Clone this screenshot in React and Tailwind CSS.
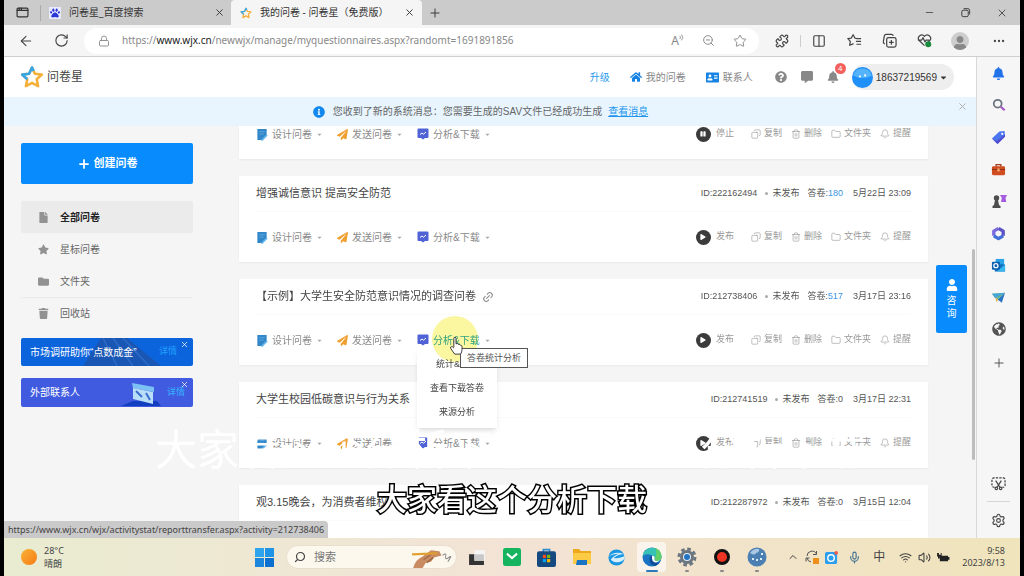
import { useState } from "react";
import {
  ArrowLeft, RotateCw, Lock, ZoomOut, Star, Puzzle, Columns2, X, Plus, Minus, Copy, Trash2,
  Folder, Bell, Ellipsis, ChevronUp, Mic, Wifi, Volume2, Search, AppWindow, Link2, Settings,
} from "lucide-react";
import {
  FaPaw, FaHome, FaAddressCard, FaQuestionCircle, FaCommentAlt, FaBell, FaCaretDown, FaFile,
  FaStar, FaFolder, FaTrash, FaPlay, FaPause, FaPaperPlane, FaInfoCircle, FaGlobeAmericas, FaUser,
} from "react-icons/fa";

const tools = ["设计问卷", "发送问卷", "分析&下载"];

const surveys = [
  { running: true },
  { title: "增强诚信意识 提高安全防范", id: "222162494", answers: 180, date: "5月22日 23:09" },
  { title: "【示例】大学生安全防范意识情况的调查问卷", id: "212738406", answers: 517, date: "3月17日 23:16", open: true },
  { title: "大学生校园低碳意识与行为关系", id: "212741519", answers: 0, date: "3月17日 22:31" },
  { title: "观3.15晚会，为消费者维权", id: "212287972", answers: 0, date: "3月15日 12:04", collapsed: true },
];

const navItems = [
  { label: "全部问卷", icon: FaFile },
  { label: "星标问卷", icon: FaStar },
  { label: "文件夹", icon: FaFolder },
  { label: "回收站", icon: FaTrash },
];

function StarLogo({ className }) {
  return (
    <svg viewBox="0 0 24 24" className={className} fill="none" strokeWidth="2.6" strokeLinejoin="round">
      <path d="M12 2.5l2.9 6.3 6.9.8-5.1 4.7 1.4 6.9L12 17.8l-6.1 3.4 1.4-6.9-5.1-4.7 6.9-.8z" stroke="#f5b03a" />
      <path d="M7.3 14.3L2.2 9.6l6.9-.8L12 2.5l1.6 3.5" stroke="#35a5e8" />
    </svg>
  );
}

/* ---------- browser chrome ---------- */

function TabStrip() {
  return (
    <div className="flex h-[25px] shrink-0 items-center bg-[#cbcbcb] text-[10px] text-[#333]">
      <button aria-label="Workspaces" className="flex h-4 w-[37px] items-center justify-center border-r border-[#aaa]">
        <AppWindow className="size-[13px]" strokeWidth={2.2} />
      </button>
      <div className="flex w-[190px] items-center gap-2 pl-2">
        <span className="flex size-3 items-center justify-center bg-[#e8eaff]">
          <FaPaw className="size-[10px] text-[#2a37d8]" />
        </span>
        <span className="flex-1">问卷星_百度搜索</span>
        <button aria-label="Close tab" className="pr-[6px]"><X className="size-[11px]" /></button>
      </div>
      <div className="flex w-[191px] items-center gap-2 self-stretch rounded-t bg-[#f5f5f5] pl-[9px]">
        <StarLogo className="size-3" />
        <span className="flex-1 whitespace-nowrap">我的问卷 - 问卷星（免费版）</span>
        <button aria-label="Close tab" className="pr-[7px]"><X className="size-[11px]" /></button>
      </div>
      <button aria-label="New tab" className="px-[6px]"><Plus className="size-[14px]" strokeWidth={1.6} /></button>
      <div className="ml-auto flex items-center gap-[25px] pr-3">
        <button aria-label="Minimize"><Minus className="size-[11px]" strokeWidth={1.6} /></button>
        <button aria-label="Restore">
          <svg viewBox="0 0 12 12" className="size-[11px]" fill="none" stroke="#333">
            <rect x="2" y="3.5" width="7" height="7" rx="1.5" />
            <path d="M4 1.8h4.5a2 2 0 0 1 2 2V8" />
          </svg>
        </button>
        <button aria-label="Close window"><X className="size-3" strokeWidth={1.6} /></button>
      </div>
    </div>
  );
}

function AddressBar() {
  return (
    <div className="flex h-8 shrink-0 items-center border-b border-[#cfcfcf] bg-[#f5f5f5] text-[#444]">
      <button aria-label="Back" className="w-11 pl-[14px]"><ArrowLeft className="size-4" strokeWidth={1.6} /></button>
      <button aria-label="Reload" className="w-9 pl-[6px]"><RotateCw className="size-[15px]" strokeWidth={1.8} /></button>
      <div className="flex h-[26px] flex-1 items-center rounded-full bg-white pr-3 pl-[14px] text-[#888]">
        <Lock className="size-3" strokeWidth={1.8} />
        <p className="ml-3 flex-1 text-[10px] whitespace-nowrap">
          https://<span className="text-[#222]">www.wjx.cn</span>/newwjx/manage/myquestionnaires.aspx?randomt=1691891856
        </p>
        <div className="flex items-center gap-[18px]">
          <button aria-label="Read aloud" className="flex items-start">
            <span className="text-[12px] leading-[14px]">A</span>
            <svg viewBox="0 0 6 8" className="h-[7px] w-[5px]" fill="none" stroke="#888">
              <path d="M1 2q1.500 2 0 4M3 .5q3 3.500 0 7" />
            </svg>
          </button>
          <button aria-label="Zoom"><ZoomOut className="size-[13px]" strokeWidth={1.8} /></button>
          <button aria-label="Favourite"><Star className="size-[14px]" strokeWidth={1.6} /></button>
        </div>
      </div>
      <div className="flex items-center pl-[5px]">
        <button aria-label="Extensions" className="flex w-9 justify-center"><Puzzle className="size-[14px]" /></button>
        <span className="h-3 w-px bg-[#ccc]" />
        <button aria-label="Split screen" className="flex w-9 justify-center"><Columns2 className="size-[14px]" /></button>
        <button aria-label="Favourites" className="flex w-[35px] justify-center">
          <svg viewBox="0 0 16 16" className="size-[15px]" fill="none" stroke="#444" strokeWidth="1.3" strokeLinejoin="round">
            <path d="M10 5.700L8.400 5.400 6.500 1.800 4.600 5.400.9 6l2.600 2.900-.6 4.200L7 11.300M10 6h5M9.500 9h5.500M10 12h5" />
          </svg>
        </button>
        <button aria-label="Collections" className="flex w-[35px] justify-center">
          <svg viewBox="0 0 16 16" className="size-[15px]" fill="none" stroke="#444" strokeWidth="1.3">
            <rect x="5" y="5" width="10" height="10" rx="2" />
            <path d="M10 7.500v5M7.500 10h5M3 11.500A2 2 0 0 1 1.500 9L2.500 3a2 2 0 0 1 2-1.500h5.500a2 2 0 0 1 2 1.500" />
          </svg>
        </button>
        <button aria-label="Browser essentials" className="flex w-[35px] justify-center">
          <svg viewBox="0 0 16 16" className="size-[15px]" fill="none" stroke="#444" strokeWidth="1.3" strokeLinejoin="round">
            <path d="M8 13.500L2.300 8A3.600 3.600 0 0 1 8 3.500 3.600 3.600 0 0 1 13.700 8L12 9.800M1 7.500h4l1.500-2.500 2 4.500 1.200-2H13" />
            <circle cx="12" cy="12" r="3.200" fill="#188a3b" stroke="none" />
          </svg>
        </button>
        <button aria-label="Profile" className="mx-[9px] flex size-[18px] items-end justify-center overflow-hidden rounded-full bg-[#cdcdcd]">
          <FaUser className="size-[14px] text-[#888]" />
        </button>
        <button aria-label="Settings and more" className="flex w-[42px] justify-center"><Ellipsis className="size-[14px]" /></button>
      </div>
    </div>
  );
}

function BrowserSidebar() {
  const cell = "flex h-8 items-center justify-center";
  return (
    <aside className="flex w-11 shrink-0 flex-col border-l border-[#d8d8d8] bg-[#f6f6f6] text-[#444]">
      <button aria-label="Notifications" className={cell}><FaBell className="size-[13px] text-[#2273ea]" /></button>
      <button aria-label="Search" className={cell}>
        <svg viewBox="0 0 16 16" className="size-[14px]" fill="none" strokeWidth="2">
          <circle cx="6.500" cy="6.500" r="4.500" stroke="#6b7280" />
          <path d="M10 10l4.500 4" stroke="#a855c8" strokeWidth="2.600" />
        </svg>
      </button>
      <button aria-label="Shopping" className={cell}>
        <svg viewBox="0 0 16 16" className="size-[15px]">
          <path d="M9 1.500l5.500-.5.5 6-8 8L1 9z" fill="#4a75ee" />
          <path d="M1 9l6 6 8-8-.2-2L6 12z" fill="#5549cc" />
          <circle cx="12" cy="4" r="1.200" fill="#fff" />
        </svg>
      </button>
      <button aria-label="Tools" className={cell}>
        <svg viewBox="0 0 16 16" className="size-[15px]">
          <path d="M5.500 5V2.800h5V5" fill="none" stroke="#a43a17" strokeWidth="1.400" />
          <rect x="1" y="4.500" width="14" height="9.500" rx="1.500" fill="#cf4d20" />
          <path d="M1 8h14" stroke="#8f2e10" />
          <rect x="6.800" y="7" width="2.400" height="3" fill="#ffb072" />
        </svg>
      </button>
      <button aria-label="Games" className={cell}>
        <svg viewBox="0 0 16 16" className="size-[16px]">
          <path d="M9 2h7l-1.500 3 .8 4H10l.8-4z" fill="#a45be0" />
          <circle cx="5.500" cy="5" r="2.700" fill="#4d4d4d" />
          <path d="M4 7h3l1 5 1.500 1v2h-8v-2L3 12z" fill="#4d4d4d" />
        </svg>
      </button>
      <button aria-label="Microsoft 365" className={cell}>
        <svg viewBox="0 0 16 16" className="size-[15px]" fill="none" strokeWidth="3.600" strokeLinejoin="round">
          <path d="M8 2.500L3 5.500v5" stroke="#7b6be0" />
          <path d="M3 10.500l5 3 5-3" stroke="#3f6fd8" />
          <path d="M13 10.500v-5L8 2.500" stroke="#5c54c4" />
        </svg>
      </button>
      <button aria-label="Outlook" className={cell}>
        <svg viewBox="0 0 16 16" className="size-[15px]">
          <rect x="5" y="1" width="9" height="9" fill="#2aa3e8" />
          <path d="M4 6l11 1v7.500H4z" fill="#1370bd" />
          <path d="M15 7l-9 7.500h9z" fill="#37b6f0" />
          <rect x="1" y="4" width="8.500" height="8.500" rx="1" fill="#0c62b0" />
          <circle cx="5.200" cy="8.200" r="2.200" fill="none" stroke="#fff" strokeWidth="1.300" />
        </svg>
      </button>
      <button aria-label="Drop" className={cell}>
        <svg viewBox="0 0 16 16" className="size-[15px]">
          <path d="M1 4l14-1-8 7z" fill="#6bbf7c" />
          <path d="M1 4l14-1L4.500 9z" fill="#49a5d8" />
          <path d="M15 3L7 10l4.500 3.500z" fill="#2b76c4" />
          <path d="M4.500 8l3 2-1.500 3z" fill="#e5b13b" />
        </svg>
      </button>
      <button aria-label="Website" className={cell}><FaGlobeAmericas className="size-[14px] text-[#555]" /></button>
      <button aria-label="Add" className="flex h-9 items-center justify-center"><Plus className="size-[14px]" strokeWidth={1.5} /></button>
      <button aria-label="Screenshot" className="mt-auto flex h-9 items-center justify-center">
        <svg viewBox="0 0 16 16" className="size-[15px]" fill="none" stroke="#444" strokeWidth="1.300">
          <path d="M4 12H3a2 2 0 0 1-2-2V4a2 2 0 0 1 2-2h10a2 2 0 0 1 2 2v6a2 2 0 0 1-2 2h-1" strokeDasharray="2.500 1.200" />
          <path d="M5 5l4.500 7M11 5l-4.500 7" />
          <circle cx="5.700" cy="13.200" r="1.300" />
          <circle cx="10.300" cy="13.200" r="1.300" />
        </svg>
      </button>
      <span className="mx-[10px] h-px bg-[#d5d5d5]" />
      <button aria-label="Sidebar settings" className="flex h-9 items-center justify-center"><Settings className="size-[15px]" strokeWidth={1.8} /></button>
    </aside>
  );
}

/* ---------- questionnaire site ---------- */

function SiteHeader() {
  return (
    <header className="flex h-10 shrink-0 items-center bg-white pr-[22px] pl-4 text-[10px] text-[#888]">
      <StarLogo className="size-6" />
      <h1 className="ml-[3px] text-[12px] text-[#444]">问卷星</h1>
      <nav className="ml-auto flex items-center">
        <a href="#upgrade" className="text-[#2b9bf0]">升级</a>
        <a href="#mine" className="ml-5 flex items-center gap-1"><FaHome className="size-3 text-[#1683e4]" />我的问卷</a>
        <a href="#contacts" className="ml-5 flex items-center gap-1"><FaAddressCard className="size-[13px] text-[#1683e4]" />联系人</a>
      </nav>
      <button aria-label="Help" className="ml-[22px]"><FaQuestionCircle className="size-3" /></button>
      <button aria-label="Feedback" className="ml-[14px]"><FaCommentAlt className="size-3" /></button>
      <button aria-label="Messages" className="relative ml-[14px]">
        <FaBell className="size-3" />
        <span className="absolute -top-2 left-2 flex size-[11px] items-center justify-center rounded-full bg-[#f4615c] text-[8px] leading-none text-white">4</span>
      </button>
      <button className="ml-[13px] flex h-[26px] items-center rounded-full bg-[#efeeee] pr-[6px] text-[#333]">
        <svg viewBox="0 0 20 20" className="size-[21px]">
          <circle cx="10" cy="10" r="10" fill="#1e90f8" />
          <path d="M1 8a9.500 9.500 0 0 1 18 0q-8 5-18 0" fill="#55b3fb" />
          <circle cx="7.500" cy="9" r="1" fill="#fff" />
          <circle cx="12.500" cy="8" r="1" fill="#fff" />
        </svg>
        <span className="mr-[2px] ml-[3px]">18637219569</span>
        <FaCaretDown className="size-[9px]" />
      </button>
    </header>
  );
}

function Notice() {
  const [visible, setVisible] = useState(true);
  if (!visible) return null;
  return (
    <div className="flex h-[29px] shrink-0 items-center bg-[#e8f5fe] pr-2 text-[10px] text-[#666]">
      <p className="flex flex-1 items-center justify-center">
        <FaInfoCircle className="mr-2 size-3 text-[#1288ee]" />
        您收到了新的系统消息：您需要生成的SAV文件已经成功生成
        <a href="#messages" className="ml-[6px] text-[#2296ee] underline">查看消息</a>
      </p>
      <button aria-label="Dismiss" className="self-start pt-1 text-[#aaa]" onClick={() => setVisible(false)}>
        <X className="size-[11px]" />
      </button>
    </div>
  );
}

function SideNav() {
  const [active, setActive] = useState(0);
  return (
    <div className="w-[172px] shrink-0">
      <button className="flex h-[41px] w-full items-center justify-center gap-[3px] rounded-xs bg-[#078bfd] text-[11px] font-bold text-white">
        <Plus className="size-[14px]" strokeWidth={3} />创建问卷
      </button>
      <nav className="mt-[17px] text-[10px]">
        {navItems.map(({ label, icon: Icon }, i) => (
          <button
            key={label}
            onClick={() => setActive(i)}
            className={`flex h-8 w-full items-center gap-[11px] rounded-xs pl-[17px] ${
              i === active ? "bg-[#ebebeb] font-bold text-[#222]" : "text-[#666]"
            } ${i === 3 ? "border-t border-[#eaeaea]" : ""}`}
          >
            <Icon className="size-[11px] text-[#929292]" />
            {label}
          </button>
        ))}
      </nav>
      <div className="relative mt-[9px] flex h-7 items-center justify-between rounded-xs bg-[#0c64dd] pr-4 pl-[9px] text-[10px] text-white">
        <svg viewBox="0 0 172 28" className="absolute inset-0 size-full" preserveAspectRatio="none">
          <path d="M62 28l18-28h26l34 28z" fill="#1a56b4" />
          <path d="M82 0l14 28M92 0l20 28M102 0l26 28" stroke="#2b6cc9" strokeWidth="1.500" />
        </svg>
        <span className="relative whitespace-nowrap">市场调研助你“点数成金”</span>
        <a href="#market" className="relative text-[9px] text-[#20a0ff]">详情</a>
        <button aria-label="Close market promo" className="absolute top-[2px] right-1"><X className="size-[9px]" /></button>
      </div>
      <div className="relative mt-3 flex h-[29px] items-center justify-between rounded-xs bg-[#405bdf] pr-2 pl-[9px] text-[10px] text-white">
        <svg viewBox="0 0 42 27" className="absolute right-8 bottom-0 h-[27px] w-[42px]">
          <path d="M2 26l12-5h24l4 5z" fill="#123fc0" />
          <path d="M13 3l22 4v5l-21-4z" fill="#7cc1f5" />
          <path d="M14 8l20 4v12l-20-5z" fill="#b9def7" />
          <path d="M17 11l6 6M27 13l4 7" stroke="#3a6fd0" strokeWidth="2" />
        </svg>
        <span>外部联系人</span>
        <a href="#external" className="relative text-[9px] text-[#35b4ff]">详情</a>
        <button aria-label="Close contacts promo" className="absolute top-[2px] right-1"><X className="size-[9px]" /></button>
      </div>
    </div>
  );
}

function ToolIcon({ index }) {
  if (index === 0)
    return (
      <svg viewBox="0 0 12 14" className="h-[13px] w-3">
        <path d="M1 1h10v7l-5 5H1z" fill="#3287c8" />
        <path d="M3 4h6M3 6.500h5" stroke="#5ea8dd" />
        <path d="M11.500 7.500L7 12l-1.500 1.500" stroke="#63b4ea" strokeWidth="1.800" />
      </svg>
    );
  if (index === 1) return <FaPaperPlane className="size-[11px] text-[#f0a030]" />;
  return (
    <svg viewBox="0 0 12 12" className="size-3">
      <path d="M1.500 .5h9a1 1 0 0 1 1 1v7.500a1 1 0 0 1-1 1H8l-2 1.500L4 10H1.500a1 1 0 0 1-1-1V1.500a1 1 0 0 1 1-1z" fill="#4f63d6" />
      <path d="M3 6.500l2-1.500 1.500 1.200L9 4" fill="none" stroke="#fff" />
    </svg>
  );
}

function AnalysisMenu() {
  return (
    <>
      <ul className="absolute top-full left-0 w-20 bg-white py-1 text-center text-[9px] text-[#444] shadow-md">
        {["统计&分析", "查看下载答卷", "来源分析"].map((item) => (
          <li key={item} className="h-6 leading-6"><a href="#analysis">{item}</a></li>
        ))}
      </ul>
      <span className="pointer-events-none absolute -top-4 left-[15px] size-[46px] rounded-full bg-[#fbf7a0] mix-blend-multiply" />
      <span role="tooltip" className="absolute top-full left-[43px] h-5 border border-[#555] bg-white px-[6px] text-[9px] leading-[18px] whitespace-nowrap text-[#555]">
        答卷统计分析
      </span>
      <svg viewBox="0 0 16 22" className="pointer-events-none absolute top-1 left-8 h-[19px] w-[14px]">
        <path
          d="M5.500 13V3q0-1.500 1.300-1.500T8 3v6q2.500-.8 2.800.8 2.200-.6 2.400 1 1.800-.3 1.800 1.700v3q0 3-1.700 5.500H6.500Q4 17.500 2 14.500q-1-1.800.4-2.200T5.500 14"
          fill="#fff" stroke="#333" strokeWidth="1.100"
        />
      </svg>
    </>
  );
}

function SurveyToolbar({ survey }) {
  return (
    <div className={`flex justify-between ${survey.title ? "h-[50px] items-center" : "h-[33px] items-start"}`}>
      <div className="flex gap-[14px] text-[10px] text-[#8a8a8a]">
        {tools.map((label, i) => {
          const hovered = survey.open && i === 2;
          return (
            <div key={label} className="relative">
              <button className="flex h-4 items-center gap-1">
                <ToolIcon index={i} />
                <span className={hovered ? "text-[#2fa6c8]" : ""}>{label}</span>
                <FaCaretDown className="size-[7px] text-[#aaa]" />
              </button>
              {hovered && <AnalysisMenu />}
            </div>
          );
        })}
      </div>
      <div className="flex h-4 items-center gap-[9px] text-[9px] text-[#999]">
        <button className="mr-2 flex items-center gap-[5px]">
          <span className="flex size-[15px] items-center justify-center rounded-full bg-[#3b3b3b] text-white">
            {survey.running ? <FaPause className="size-[6px]" /> : <FaPlay className="size-[6px]" />}
          </span>
          {survey.running ? "停止" : "发布"}
        </button>
        <button className="flex items-center gap-[3px]"><Copy className="size-[10px] -scale-x-100" strokeWidth={1.5} />复制</button>
        <button className="flex items-center gap-[3px]"><Trash2 className="size-[10px]" strokeWidth={1.5} />删除</button>
        <button className="flex items-center gap-[3px]"><Folder className="size-[10px]" strokeWidth={1.5} />文件夹</button>
        <button className="flex items-center gap-[3px]"><Bell className="size-[10px]" strokeWidth={1.5} />提醒</button>
      </div>
    </div>
  );
}

function SurveyCard({ survey }) {
  return (
    <article
      className={`bg-white px-[17px] shadow-xs ${survey.open ? "relative z-10 shadow-md" : ""} ${
        survey.collapsed ? "flex-1" : ""
      }`}
    >
      {survey.title && (
        <div className="flex h-9 items-center justify-between border-b border-[#fafafa]">
          <h2 className="flex items-center gap-[6px] text-[11px] text-[#444]">
            {survey.title}
            {survey.open && <Link2 className="size-3 -rotate-45 text-[#888]" />}
          </h2>
          <div className="flex items-center text-[9px] text-[#555]">
            <span>ID:{survey.id}</span>
            <span className="mr-1 ml-2 size-[3px] rounded-full bg-[#aaa]" />
            <span>未发布</span>
            <span className="ml-2">
              答卷:<span className={survey.answers ? "text-[#3d94e6]" : ""}>{survey.answers}</span>
            </span>
            <span className="ml-[10px]">{survey.date}</span>
          </div>
        </div>
      )}
      {!survey.collapsed && <SurveyToolbar survey={survey} />}
    </article>
  );
}

/* ---------- windows taskbar ---------- */

function TaskButton({ label, active, running, children }) {
  return (
    <button
      aria-label={label}
      className={`relative flex h-[30px] w-[29px] items-center justify-center rounded ${active ? "bg-white/60" : ""}`}
    >
      {children}
      {active && <span className="absolute bottom-0 h-[2px] w-3 rounded bg-[#2c78b8]" />}
      {running && <span className="absolute bottom-0 h-[2px] w-1 rounded bg-[#888]" />}
    </button>
  );
}

function Taskbar() {
  return (
    <footer className="relative flex h-[38px] shrink-0 items-center justify-between bg-linear-to-r from-[#e9ecd0] via-[#f3e3d6] to-[#efe4bb] text-[9px] text-[#444]">
      <div className="flex items-center gap-[7px] pl-[17px]">
        <span className="size-4 rounded-full bg-linear-to-br from-[#f9b233] to-[#f57a14]" />
        <p className="leading-[13px]">28°C<br />晴朗</p>
      </div>
      <div className="absolute left-[251px] flex items-center">
        <button aria-label="Start" className="grid size-[19px] grid-cols-2 gap-px">
          <span className="bg-[#2fa4ee]" />
          <span className="bg-[#1f94e6]" />
          <span className="bg-[#1a86de]" />
          <span className="bg-[#0c70d0]" />
        </button>
        <label className="ml-3 flex h-6 w-[171px] items-center rounded-full border border-[#eadfce] bg-[#fdf8ee] pr-1 pl-[7px]">
          <Search className="size-3 -scale-x-100" strokeWidth={2.4} />
          <input type="text" placeholder="搜索" aria-label="搜索" className="ml-2 w-0 flex-1 bg-transparent text-[11px] outline-none placeholder:text-[#777]" />
          <svg viewBox="0 0 40 20" className="h-[21px] w-[42px]">
            <path d="M3 20q2-8 9-11l8-6 8 1 2 4-7 2-3 4-5 1-3 5z" fill="#c98c62" />
            <path d="M13 12l7-5M16 15l6-5" stroke="#96603e" />
            <path d="M2 7l24-1" stroke="#e0a030" strokeWidth="2" />
            <path d="M31 8q4-3 3 1t3 1-1 4" fill="none" stroke="#888" />
          </svg>
        </label>
        <div className="ml-[5px] flex gap-[6px]">
          <TaskButton label="Task view">
            <svg viewBox="0 0 16 16" className="size-[17px]">
              <rect x="6" y="1" width="10" height="10" fill="#f4f4f4" />
              <path d="M1 5h5v6h9v4H1z" fill="#333" />
              <rect x="6" y="5" width="9" height="6" fill="#c8c8c8" />
            </svg>
          </TaskButton>
          <TaskButton label="Mail">
            <svg viewBox="0 0 16 16" className="size-[18px]">
              <rect width="16" height="16" rx="2" fill="#17b45f" />
              <path d="M3.500 5l4.500 4 4.500-4" fill="none" stroke="#fff" strokeWidth="1.800" />
            </svg>
          </TaskButton>
          <TaskButton label="Store">
            <svg viewBox="0 0 18 18" className="size-[19px]">
              <path d="M6 4V1.500h6V4" fill="none" stroke="#2c8bd0" strokeWidth="1.500" />
              <rect x="0" y="3" width="18" height="15" rx="2" fill="#154a80" />
              <path d="M5.500 6.500h3v3h-3z" fill="#f25022" />
              <path d="M9.500 6.500h3v3h-3z" fill="#7fba00" />
              <path d="M5.500 10.500h3v3h-3z" fill="#00a4ef" />
              <path d="M9.500 10.500h3v3h-3z" fill="#ffb900" />
            </svg>
          </TaskButton>
          <TaskButton label="Files">
            <svg viewBox="0 0 20 18" className="h-[18px] w-5">
              <path d="M1 1h6l2 2h10v13H1z" fill="#eda81c" />
              <rect x="1" y="5" width="18" height="11" rx="1" fill="#fbcb45" />
              <path d="M5 12h10v5H4z" fill="#1b73c4" />
            </svg>
          </TaskButton>
          <TaskButton label="Browser">
            <svg viewBox="0 0 20 20" className="size-[19px]">
              <circle cx="10" cy="10" r="8.500" fill="#1b96e0" />
              <path d="M1 9.500Q8 2.500 18 6.500q-6-.5-11 4 6 1 12-2-1 6-7 6.500Q6 15 4 12q4-5 9-6-7 0-12 3.500z" fill="#d9effb" />
            </svg>
          </TaskButton>
          <TaskButton label="Edge" active>
            <svg viewBox="0 0 20 20" className="size-5">
              <circle cx="10" cy="10" r="9.500" fill="#1b74c4" />
              <path d="M.6 9A9.500 9.500 0 0 1 19.500 10q0 4-4.500 4-3 0-2.500-2 .8-3-3-4Q4 6 .6 9z" fill="#36c2b4" />
              <path d="M13 1a9.500 9.500 0 0 1 6.500 9q0 4-4.500 4-3 0-2.500-2Q16 6 13 1z" fill="#62cf68" />
              <path d="M12.500 12q-1.500 2 1 3.500 2 1 4.500-.5a9.500 9.500 0 0 1-4.500 3.900Q7 18 7.500 12q.5-3 2.500-3.500 3 .5 2.500 3.500z" fill="#0f4f99" />
              <path d="M10 8.500q3.500.5 2.500 3.700-.3 1.800 2.500 1.800 2 0 3-.7-2.500 2.700-5.500 2-2.500-1-2.500-3.800z" fill="#fff" />
            </svg>
          </TaskButton>
          <TaskButton label="Settings" running>
            <svg viewBox="0 0 20 20" className="size-5">
              <circle cx="10" cy="10" r="8" fill="none" stroke="#6c7680" strokeWidth="3" strokeDasharray="3.600 2.680" />
              <circle cx="10" cy="10" r="5.500" fill="#e8edf2" stroke="#6c7680" strokeWidth="3" />
              <circle cx="10" cy="10" r="3" fill="#2273c4" />
            </svg>
          </TaskButton>
          <TaskButton label="Recorder" running>
            <span className="size-4 rounded-full border-[3px] border-[#111] bg-[#ee3524]" />
          </TaskButton>
          <TaskButton label="Globe" running>
            <svg viewBox="0 0 20 20" className="size-5">
              <circle cx="10" cy="10" r="9.500" fill="#4c7fb2" />
              <path d="M3 6q4-5 9-4 1 3-3 4-1 3-6 0z" fill="#a8c8e4" />
              <path d="M5 12h2M9 13h2M13 12h2M14 7h2" stroke="#dcebf8" strokeWidth="2" />
            </svg>
          </TaskButton>
        </div>
      </div>
      <div className="flex items-center pr-[15px]">
        <ChevronUp className="size-3" />
        <svg viewBox="0 0 14 14" className="ml-[6px] size-[14px]" fill="none" stroke="#555">
          <path d="M2 6a5 5 0 0 1 9.500-2M11.500 1v3.500H8M6 12a5 5 0 0 1-4-4M1 11.500V8h3.500" />
          <rect x="8" y="8" width="6" height="6" fill="#ee8e1c" stroke="none" />
        </svg>
        <svg viewBox="0 0 14 14" className="ml-[6px] size-[13px]">
          <rect y="1" width="13" height="13" rx="2" fill="#2a9ff0" />
          <circle cx="6.500" cy="7.500" r="3.500" fill="none" stroke="#fff" strokeWidth="1.500" />
          <circle cx="12" cy="2" r="2" fill="#ee5a4a" />
        </svg>
        <Mic className="ml-[10px] size-[13px] text-[#3d6f92]" />
        <span className="ml-3 text-[12px]">中</span>
        <Wifi className="ml-[14px] size-[13px]" />
        <Volume2 className="ml-[6px] size-[13px]" />
        <svg viewBox="0 0 14 12" className="ml-[6px] h-[11px] w-[13px]">
          <path d="M3 4h9v1.500h1.500v3H12V10H3z" fill="#222" />
          <path d="M0 1h2v2h2V1h1v4H3v2H1V5H0z" fill="#222" />
        </svg>
        <p className="ml-3 text-right leading-3">9:58<br />2023/8/13</p>
      </div>
    </footer>
  );
}

export default function App() {
  return (
    <div className="flex h-screen flex-col overflow-hidden bg-black px-1 font-['Noto_Sans','Noto_Sans_CJK_SC',sans-serif]">
      <TabStrip />
      <AddressBar />

      <div className="relative flex min-h-0 flex-1">
        <div className="relative flex min-w-0 flex-1 flex-col overflow-hidden bg-[#f5f5f5] font-['Liberation_Sans','Noto_Sans_CJK_SC',sans-serif]">
          <SiteHeader />
          <Notice />
          <main className="flex min-h-0 flex-1 pr-12 pl-[17px]">
            <div className="pt-[17px]"><SideNav /></div>
            <section className="ml-[46px] flex min-w-0 flex-1 flex-col gap-[17px]">
              {surveys.map((survey, i) => (
                <SurveyCard key={i} survey={survey} />
              ))}
            </section>
          </main>

          <button className="absolute top-[208px] right-[9px] flex h-[68px] w-[31px] flex-col items-center justify-center rounded-xs bg-[#078bfd] text-[10px] leading-[13px] text-white">
            <FaUser className="mb-[3px] size-3" />
            咨<br />询
          </button>
          <span className="absolute top-48 right-px h-[211px] w-[3px] rounded bg-[#bdbdbd]" />
          <span className="absolute bottom-0 left-0 h-[17px] rounded-tr-sm bg-[#cacaca] px-1 font-['Noto_Sans',sans-serif] text-[9px] leading-[17px] text-[#444]">
            https://www.wjx.cn/wjx/activitystat/reporttransfer.aspx?activity=212738406
          </span>
        </div>
        <BrowserSidebar />

        {/* captions burnt over the recording: a fading white line and the current one */}
        <p className="pointer-events-none absolute inset-x-0 bottom-[68px] z-20 flex justify-between pr-[152px] pl-[151px] text-[42px] leading-none text-white">
          <span>大家看这个分析下载</span>
          <span>分析下载</span>
        </p>
        <p className="pointer-events-none absolute inset-x-0 bottom-5 z-20 text-center text-[30px] leading-[38px] font-medium text-white [-webkit-text-stroke:3px_black] [paint-order:stroke_fill]">
          大家看这个分析下载
        </p>
      </div>

      <Taskbar />
    </div>
  );
}
